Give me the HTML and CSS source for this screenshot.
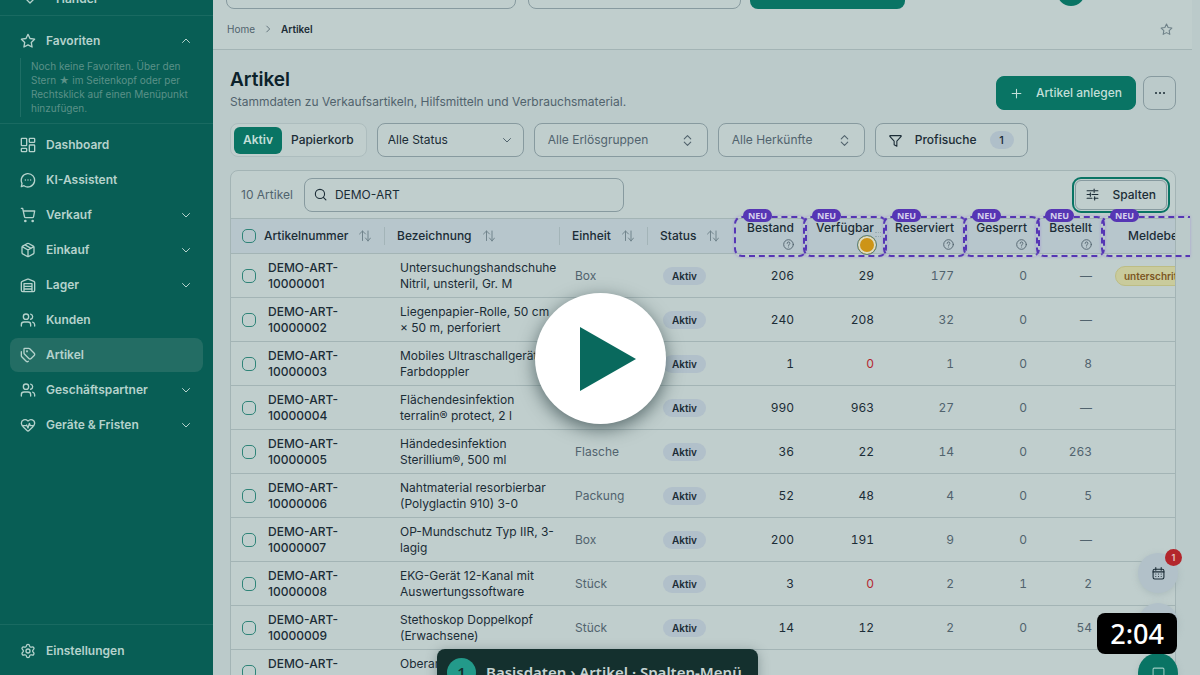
FILE: index.html
```html
<!DOCTYPE html>
<html lang="de">
<head>
<meta charset="utf-8">
<title>Artikel</title>
<link rel="stylesheet" href="styles.css">
</head>
<body>
<svg class="sprite" aria-hidden="true">
  <symbol id="star" viewBox="0 0 24 24"><path d="M12 2l3 6.3 6.9 1-5 4.800 1.200 6.900L12 17.800 5.900 21l1.200-6.900-5-4.800 6.900-1z"/></symbol>
  <symbol id="up" viewBox="0 0 24 24"><path d="m5 15 7-7 7 7"/></symbol>
  <symbol id="down" viewBox="0 0 24 24"><path d="m5 9 7 7 7-7"/></symbol>
  <symbol id="right" viewBox="0 0 24 24"><path d="m9 5 7 7-7 7"/></symbol>
  <symbol id="updown" viewBox="0 0 24 24"><path d="m6 15 6 6 6-6M6 9l6-6 6 6"/></symbol>
  <symbol id="shield" viewBox="0 0 24 24"><path d="m4 10 8 8 8-8"/></symbol>
  <symbol id="dashboard" viewBox="0 0 24 24"><rect x="2" y="2" width="8" height="11" rx="1"/><rect x="14" y="2" width="8" height="6" rx="1"/><rect x="14" y="12" width="8" height="10" rx="1"/><rect x="2" y="17" width="8" height="5" rx="1"/></symbol>
  <symbol id="chat" viewBox="0 0 24 24"><path d="M6 20.500A10 10 0 1 0 3 17L2 22zM8 12h.01M12 12h.01M16 12h.01"/></symbol>
  <symbol id="cart" viewBox="0 0 24 24"><circle cx="8" cy="21" r="1"/><circle cx="19" cy="21" r="1"/><path d="M2 2h2l2.700 12.400a2 2 0 0 0 2 1.600h9.700a2 2 0 0 0 2-1.600L22 6H5"/></symbol>
  <symbol id="package" viewBox="0 0 24 24"><path d="M11 21.700a2 2 0 0 0 2 0l7-4a2 2 0 0 0 1-1.700V8a2 2 0 0 0-1-1.700l-7-4a2 2 0 0 0-2 0l-7 4A2 2 0 0 0 3 8v8a2 2 0 0 0 1 1.700zM12 22V12M3.300 7 12 12l8.700-5M7.500 4.300l9 5.150"/></symbol>
  <symbol id="warehouse" viewBox="0 0 24 24"><path d="M22 8.300V20a2 2 0 0 1-2 2H4a2 2 0 0 1-2-2V8.300a2 2 0 0 1 1.300-1.800l8-3.200a2 2 0 0 1 1.500 0l8 3.200A2 2 0 0 1 22 8.300zM6 18h12M6 14h12M6 22V10h12v12"/></symbol>
  <symbol id="users" viewBox="0 0 24 24"><path d="M16 21v-2a4 4 0 0 0-4-4H6a4 4 0 0 0-4 4v2M22 21v-2a4 4 0 0 0-3-3.870M16 3.130a4 4 0 0 1 0 7.750"/><circle cx="9" cy="7" r="4"/></symbol>
  <symbol id="tags" viewBox="0 0 24 24"><path d="M13.172 2a2 2 0 0 1 1.414.586l6.710 6.710a2.400 2.400 0 0 1 0 3.408l-4.592 4.592a2.400 2.400 0 0 1-3.408 0l-6.710-6.710A2 2 0 0 1 6 9.172V3a1 1 0 0 1 1-1zM2 7v6.172a2 2 0 0 0 .586 1.414l6.710 6.710a2.400 2.400 0 0 0 3.191.193"/><circle cx="10.500" cy="6.500" r=".6"/></symbol>
  <symbol id="heart" viewBox="0 0 24 24"><path d="M2 9.500a5.500 5.500 0 0 1 9.591-3.676.56.56 0 0 0 .818 0A5.490 5.490 0 0 1 22 9.500c0 2.290-1.500 4-3 5.500l-5.492 5.313a2 2 0 0 1-3 .019L5 15c-1.500-1.500-3-3.200-3-5.500M3.220 13H9.500l.5-1 2 4.500 2-7 1.500 3.500h5.270"/></symbol>
  <symbol id="gear" viewBox="0 0 24 24"><path d="M9.671 4.136a2.340 2.340 0 0 1 4.659 0 2.340 2.340 0 0 0 3.319 1.915 2.340 2.340 0 0 1 2.330 4.033 2.340 2.340 0 0 0 0 3.831 2.340 2.340 0 0 1-2.330 4.033 2.340 2.340 0 0 0-3.319 1.915 2.340 2.340 0 0 1-4.659 0 2.340 2.340 0 0 0-3.320-1.915 2.340 2.340 0 0 1-2.330-4.033 2.340 2.340 0 0 0 0-3.831A2.340 2.340 0 0 1 6.350 6.051a2.340 2.340 0 0 0 3.319-1.915"/><circle cx="12" cy="12" r="3"/></symbol>
  <symbol id="plus" viewBox="0 0 24 24"><path d="M4 12h16M12 4v16"/></symbol>
  <symbol id="dots" viewBox="0 0 24 24"><path d="M4 12h.01M12 12h.01M20 12h.01"/></symbol>
  <symbol id="funnel" viewBox="0 0 24 24"><path d="M2 3h20a.7.7 0 0 1 .5 1.200L14.500 13v9.500l-5-2.500V13L1.500 4.200A.7.700 0 0 1 2 3z"/></symbol>
  <symbol id="search" viewBox="0 0 24 24"><circle cx="11" cy="11" r="8.500"/><path d="m22 22-4.800-4.800"/></symbol>
  <symbol id="sliders" viewBox="0 0 24 24"><path d="M2 5h11M17 5h5M15 2v6M2 12h5M11 12h11M8 9v6M2 19h9M15 19h7M16 16v6"/></symbol>
  <symbol id="sort" viewBox="0 0 24 24"><path d="M7 21V2M1 8l6-6 6 6M18 2v20M13 16l5 6 5-6"/></symbol>
  <symbol id="help" viewBox="0 0 24 24"><circle cx="12" cy="12" r="10.500"/><path d="M9 9.500a3 3 0 0 1 6 0c0 2-3 2.500-3 4.500M12 17.500h.01"/></symbol>
  <symbol id="calendar" viewBox="0 0 24 24"><rect x="2" y="4" width="20" height="18" rx="3"/><path d="M7 1v5M17 1v5M2 9h20M7 13h.01M12 13h.01M17 13h.01M7 17.500h.01M12 17.500h.01M17 17.500h.01"/></symbol>
  <symbol id="square" viewBox="0 0 24 24"><path d="M2 24V4a2 2 0 0 1 2-2h16a2 2 0 0 1 2 2v20"/></symbol>
</svg>

<div class="app">
  <aside class="sidebar">
    <div class="org"><svg class="icon"><use href="#shield"/></svg><span>Handel</span></div>
    <section class="favorites">
      <button class="nav-item" type="button"><svg class="icon"><use href="#star"/></svg><span>Favoriten</span><svg class="chevron"><use href="#up"/></svg></button>
      <p class="hint">Noch keine Favoriten. Über den Stern ★ im Seitenkopf oder per Rechtsklick auf einen Menüpunkt hinzufügen.</p>
    </section>
    <nav class="nav">
      <a class="nav-item" href="#"><svg class="icon"><use href="#dashboard"/></svg><span>Dashboard</span></a>
      <a class="nav-item" href="#"><svg class="icon"><use href="#chat"/></svg><span>KI-Assistent</span></a>
      <a class="nav-item" href="#"><svg class="icon"><use href="#cart"/></svg><span>Verkauf</span><svg class="chevron"><use href="#down"/></svg></a>
      <a class="nav-item" href="#"><svg class="icon"><use href="#package"/></svg><span>Einkauf</span><svg class="chevron"><use href="#down"/></svg></a>
      <a class="nav-item" href="#"><svg class="icon"><use href="#warehouse"/></svg><span>Lager</span><svg class="chevron"><use href="#down"/></svg></a>
      <a class="nav-item" href="#"><svg class="icon"><use href="#users"/></svg><span>Kunden</span></a>
      <a class="nav-item active" href="#" aria-current="page"><svg class="icon"><use href="#tags"/></svg><span>Artikel</span></a>
      <a class="nav-item" href="#"><svg class="icon"><use href="#users"/></svg><span>Geschäftspartner</span><svg class="chevron"><use href="#down"/></svg></a>
      <a class="nav-item" href="#"><svg class="icon"><use href="#heart"/></svg><span>Geräte &amp; Fristen</span><svg class="chevron"><use href="#down"/></svg></a>
    </nav>
    <div class="side-foot"><a class="nav-item" href="#"><svg class="icon"><use href="#gear"/></svg><span>Einstellungen</span></a></div>
  </aside>

  <div class="main">
    <header class="page-head">
      <div class="topbar">
        <span class="top-box wide"></span><span class="top-box"></span><span class="top-button"></span><span class="avatar"></span>
      </div>
      <div class="crumb-row">
        <nav class="crumbs" aria-label="Pfad"><a href="#">Home</a><svg class="crumb-arrow"><use href="#right"/></svg><strong>Artikel</strong></nav>
        <button class="bare" type="button" aria-label="Favorit"><svg class="fav-star"><use href="#star"/></svg></button>
      </div>
    </header>

    <main class="content">
      <div class="title-row">
        <div>
          <h1>Artikel</h1>
          <p class="subtitle">Stammdaten zu Verkaufsartikeln, Hilfsmitteln und Verbrauchsmaterial.</p>
        </div>
        <div class="actions">
          <button class="btn primary" type="button"><svg class="icon-sm"><use href="#plus"/></svg>Artikel anlegen</button>
          <button class="btn more" type="button" aria-label="Mehr"><svg class="icon-dots"><use href="#dots"/></svg></button>
        </div>
      </div>

      <div class="filters">
        <div class="segmented"><button class="seg on" type="button">Aktiv</button><button class="seg" type="button">Papierkorb</button></div>
        <label class="select-box"><select aria-label="Status"><option>Alle Status</option></select><svg class="chevron"><use href="#down"/></svg></label>
        <button class="combo groups" type="button">Alle Erlösgruppen<svg class="icon-sm"><use href="#updown"/></svg></button>
        <button class="combo origins" type="button">Alle Herkünfte<svg class="icon-sm"><use href="#updown"/></svg></button>
        <button class="btn pro" type="button"><svg class="icon-sm"><use href="#funnel"/></svg>Profisuche<span class="count">1</span></button>
      </div>

      <section class="card">
        <div class="toolbar">
          <span class="total">10 Artikel</span>
          <label class="search"><svg class="icon-sm"><use href="#search"/></svg><input type="text" value="DEMO-ART" aria-label="Artikel suchen"></label>
          <button class="btn columns" type="button"><svg class="icon-sm"><use href="#sliders"/></svg>Spalten</button>
        </div>
        <div class="table-wrap">
          <table>
            <colgroup><col class="c-check"><col class="c-number"><col class="c-name"><col class="c-unit"><col class="c-status"><col class="c-stock"><col class="c-free"><col class="c-reserved"><col class="c-blocked"><col class="c-ordered"><col class="c-level"></colgroup>
            <thead>
              <tr>
                <th class="check"><input type="checkbox" aria-label="Alle auswählen"></th>
                <th class="sep first">Artikelnummer<svg class="sort"><use href="#sort"/></svg></th>
                <th class="sep">Bezeichnung<svg class="sort"><use href="#sort"/></svg></th>
                <th class="sep">Einheit<svg class="sort"><use href="#sort"/></svg></th>
                <th>Status<svg class="sort"><use href="#sort"/></svg></th>
                <th class="num">Bestand<svg class="help"><use href="#help"/></svg></th>
                <th class="num">Verfügbar<svg class="help"><use href="#help"/></svg></th>
                <th class="num">Reserviert<svg class="help"><use href="#help"/></svg></th>
                <th class="num">Gesperrt<svg class="help"><use href="#help"/></svg></th>
                <th class="num">Bestellt<svg class="help"><use href="#help"/></svg></th>
                <th class="level">Meldebestand</th>
              </tr>
            </thead>
            <tbody>
              <tr><td class="check"><input type="checkbox" aria-label="10000001"></td><td class="number">DEMO-ART-10000001</td><td>Untersuchungshandschuhe Nitril, unsteril, Gr. M</td><td class="unit">Box</td><td><span class="tag">Aktiv</span></td><td class="num">206</td><td class="num">29</td><td class="num dim">177</td><td class="num dim">0</td><td class="num dim">—</td><td class="low-cell"><span class="low">unterschritten</span></td></tr>
              <tr><td class="check"><input type="checkbox" aria-label="10000002"></td><td class="number">DEMO-ART-10000002</td><td>Liegenpapier-Rolle, 50 cm × 50 m, perforiert</td><td class="unit">Box</td><td><span class="tag">Aktiv</span></td><td class="num">240</td><td class="num">208</td><td class="num dim">32</td><td class="num dim">0</td><td class="num dim">—</td><td></td></tr>
              <tr><td class="check"><input type="checkbox" aria-label="10000003"></td><td class="number">DEMO-ART-10000003</td><td>Mobiles Ultraschallgerät, Farbdoppler</td><td class="unit">Stück</td><td><span class="tag">Aktiv</span></td><td class="num">1</td><td class="num out">0</td><td class="num dim">1</td><td class="num dim">0</td><td class="num dim">8</td><td></td></tr>
              <tr><td class="check"><input type="checkbox" aria-label="10000004"></td><td class="number">DEMO-ART-10000004</td><td>Flächendesinfektion terralin® protect, 2 l</td><td class="unit">Flasche</td><td><span class="tag">Aktiv</span></td><td class="num">990</td><td class="num">963</td><td class="num dim">27</td><td class="num dim">0</td><td class="num dim">—</td><td></td></tr>
              <tr><td class="check"><input type="checkbox" aria-label="10000005"></td><td class="number">DEMO-ART-10000005</td><td>Händedesinfektion Sterillium®, 500 ml</td><td class="unit">Flasche</td><td><span class="tag">Aktiv</span></td><td class="num">36</td><td class="num">22</td><td class="num dim">14</td><td class="num dim">0</td><td class="num dim">263</td><td></td></tr>
              <tr><td class="check"><input type="checkbox" aria-label="10000006"></td><td class="number">DEMO-ART-10000006</td><td>Nahtmaterial resorbierbar (Polyglactin 910) 3-0</td><td class="unit">Packung</td><td><span class="tag">Aktiv</span></td><td class="num">52</td><td class="num">48</td><td class="num dim">4</td><td class="num dim">0</td><td class="num dim">5</td><td></td></tr>
              <tr><td class="check"><input type="checkbox" aria-label="10000007"></td><td class="number">DEMO-ART-10000007</td><td>OP-Mundschutz Typ IIR, 3-<wbr>lagig</td><td class="unit">Box</td><td><span class="tag">Aktiv</span></td><td class="num">200</td><td class="num">191</td><td class="num dim">9</td><td class="num dim">0</td><td class="num dim">—</td><td></td></tr>
              <tr><td class="check"><input type="checkbox" aria-label="10000008"></td><td class="number">DEMO-ART-10000008</td><td>EKG-Gerät 12-Kanal mit Auswertungssoftware</td><td class="unit">Stück</td><td><span class="tag">Aktiv</span></td><td class="num">3</td><td class="num out">0</td><td class="num dim">2</td><td class="num dim">1</td><td class="num dim">2</td><td></td></tr>
              <tr><td class="check"><input type="checkbox" aria-label="10000009"></td><td class="number">DEMO-ART-10000009</td><td>Stethoskop Doppelkopf (Erwachsene)</td><td class="unit">Stück</td><td><span class="tag">Aktiv</span></td><td class="num">14</td><td class="num">12</td><td class="num dim">2</td><td class="num dim">0</td><td class="num dim">54</td><td></td></tr>
              <tr><td class="check"><input type="checkbox" aria-label="10000010"></td><td class="number">DEMO-ART-10000010</td><td>Oberarm-Blutdruckmessgerät</td><td class="unit"></td><td></td><td class="num"></td><td class="num"></td><td class="num"></td><td class="num"></td><td class="num"></td><td></td></tr>
            </tbody>
          </table>
        </div>
        <div class="marks">
          <div class="mark"><span class="neu">NEU</span></div>
          <div class="mark"><span class="neu">NEU</span><span class="grip"></span><span class="pointer"></span></div>
          <div class="mark"><span class="neu">NEU</span></div>
          <div class="mark"><span class="neu">NEU</span></div>
          <div class="mark"><span class="neu">NEU</span></div>
          <div class="mark open"><span class="neu">NEU</span></div>
        </div>
      </section>
    </main>
  </div>

  <div class="fabs">
    <button class="fab" type="button" aria-label="Kalender"><svg class="icon-sm"><use href="#calendar"/></svg><span class="fab-count">1</span></button>
    <button class="fab" type="button" aria-label="Hinweise"></button>
    <button class="fab solid" type="button" aria-label="Notizen"><svg class="icon-sm"><use href="#square"/></svg></button>
  </div>
  <div class="caption"><span class="step">1</span><span>Basisdaten › Artikel · Spalten-Menü</span></div>
  <button class="play" type="button" aria-label="Video abspielen"><svg viewBox="0 0 56 64"><path d="M0 0 56 32 0 64z"/></svg></button>
  <span class="duration">2:04</span>
</div>
</body>
</html>
```

FILE: styles.css
```css
:root {
  --page: #bbcaca;
  --card: #c0cecd;
  --line: #a3b4b5;
  --field: #879a9f;
  --ink: #1b2c36;
  --muted: #51636d;
  --green: #097464;
  --side: #085e55;
  --side-ink: #b5d2cc;
  --violet: #5636b4;
}
* { box-sizing: border-box; }
body { margin: 0; font-family: Inter, "Liberation Sans", sans-serif; font-size: 12px; line-height: 16px; color: var(--ink); background: var(--page); }
button, input, select { font: inherit; color: inherit; margin: 0; }
button { padding: 0; border: 0; background: none; }
a { color: inherit; text-decoration: none; }
svg { fill: none; stroke: currentColor; stroke-width: 2; stroke-linecap: round; stroke-linejoin: round; flex: none; }
.sprite { display: none; }
.app { position: relative; display: flex; height: 100vh; overflow: hidden; }

.sidebar { flex: 0 0 213px; display: flex; flex-direction: column; background: var(--side); color: var(--side-ink); }
.org { flex: none; display: flex; align-items: flex-end; gap: 18px; height: 16px; padding: 0 22px 8px; overflow: hidden; border-bottom: 1px solid #196a61; font-weight: 600; }
.icon { width: 16px; height: 16px; }
.chevron { width: 12px; height: 12px; margin-left: auto; }
.favorites { padding: 8px 10px 6px; border-bottom: 1px solid #196a61; }
.nav-item { display: flex; align-items: center; gap: 10px; width: 100%; height: 34px; padding: 0 11px 0 10px; border-radius: 8px; font-weight: 600; text-align: left; }
.nav-item.active { background: #236d64; }
.hint { margin: 0 0 0 10px; padding: 1px 0 2px 10px; border-left: 1px solid #1e6e65; font-size: 10px; line-height: 14px; color: #5b9188; }
.nav { display: flex; flex-direction: column; gap: 1px; padding: 4px 10px; }
.side-foot { margin-top: auto; padding: 9px 10px 7px; border-top: 1px solid #196a61; }

.main { flex: 1; min-width: 0; display: flex; flex-direction: column; padding-right: 8px; }
.page-head { flex: none; background: var(--card); border-bottom: 1px solid var(--line); }
.topbar { display: flex; align-items: flex-end; height: 9px; padding: 0 107px 0 13px; overflow: hidden; }
.top-box { flex: 0 0 213px; height: 34px; margin-right: 9px; border: 1px solid var(--field); border-radius: 8px; }
.top-box.wide { flex-basis: 290px; margin-right: 12px; }
.top-button { flex: 0 0 155px; height: 34px; border-radius: 8px; background: var(--green); }
.avatar { width: 28px; height: 28px; margin: 0 0 3px auto; border-radius: 50%; background: var(--green); }
.crumb-row { display: flex; align-items: center; justify-content: space-between; height: 40px; padding: 0 19px 0 14px; }
.crumbs { display: flex; align-items: center; gap: 8px; font-size: 10px; color: var(--muted); }
.crumbs strong { font-weight: 600; color: var(--ink); }
.crumb-arrow { width: 10px; height: 10px; }
.bare { display: flex; color: #6e8188; }
.fav-star { width: 13px; height: 13px; }

.content { flex: 1; padding: 18px 16px 0 17px; }
.title-row { display: flex; justify-content: space-between; align-items: flex-end; }
h1 { margin: 0; font-size: 19px; line-height: 24px; font-weight: 600; color: #0c222b; }
.subtitle { margin: 2px 0 0; color: var(--muted); }
.actions { display: flex; gap: 7px; }
.btn { display: flex; align-items: center; height: 34px; border: 1px solid var(--field); border-radius: 8px; font-weight: 500; background: var(--card); }
.icon-sm { width: 13px; height: 13px; }
.btn.primary { gap: 13px; padding: 0 13px; border-color: var(--green); background: var(--green); color: #c3dfd9; }
.btn.more { justify-content: center; width: 33px; background: none; }
.icon-dots { width: 12px; height: 12px; stroke-width: 4; }

.filters { display: flex; gap: 10px; margin-top: 13px; }
.segmented { display: flex; align-items: center; height: 34px; padding: 0 3px; border: 1px solid #adbdbe; border-radius: 8px; background: var(--card); }
.seg { height: 27px; padding: 0 9px; border-radius: 6px; font-weight: 500; }
.seg.on { background: var(--green); color: #c3dfd9; font-weight: 600; }
.select-box, .combo { display: flex; align-items: center; height: 34px; border: 1px solid var(--field); border-radius: 8px; background: var(--card); }
.select-box { flex: 0 0 147px; padding: 0 10px; }
.select-box .chevron { color: var(--muted); }
.select-box select { flex: 1; min-width: 0; border: 0; padding: 0; background: none; appearance: none; outline: 0; }
.combo { justify-content: space-between; padding: 0 13px; color: var(--muted); }
.combo.groups { flex: 0 0 174px; }
.combo.origins { flex: 0 0 147px; }
.btn.pro { gap: 13px; padding: 0 13px; }
.count { min-width: 24px; padding: 1px 0; border-radius: 10px; background: #afbfc9; text-align: center; font-size: 11px; }

.card { position: relative; margin-top: 13px; border: 1px solid var(--line); border-radius: 8px 8px 0 0; background: var(--card); }
.toolbar { display: flex; align-items: center; gap: 11px; height: 47px; padding: 0 8px 0 10px; }
.total { color: var(--muted); }
.search { flex: 0 1 320px; display: flex; align-items: center; gap: 8px; height: 34px; padding: 0 9px; border: 1px solid var(--field); border-radius: 8px; }
.search input { flex: 1; min-width: 0; padding: 0; border: 0; background: none; outline: 0; }
.btn.columns { gap: 13px; height: 30px; margin-left: auto; padding: 0 10px; outline: 2px solid var(--green); outline-offset: 1px; border-radius: 6px; }

.table-wrap { overflow: hidden; }
table { width: 1000px; min-width: 100%; table-layout: fixed; border-collapse: separate; border-spacing: 0; }
.c-check { width: 27px; }
.c-number { width: 127px; }
.c-name { width: 175px; }
.c-unit { width: 88px; }
.c-status { width: 86px; }
.c-stock { width: 72px; }
.c-free { width: 80px; }
.c-reserved { width: 80px; }
.c-blocked { width: 73px; }
.c-ordered { width: 65px; }
th { height: 36px; padding: 0 12px; border-top: 1px solid var(--line); border-bottom: 1px solid var(--line); background: #b7c6cc; text-align: left; font-weight: 500; white-space: nowrap; }
td { height: 44px; padding: 0 4px 0 15px; border-bottom: 1px solid var(--line); }
th.check, td.check { padding: 0 0 0 11px; }
th.first { padding-left: 6px; }
td.number { padding: 0 30px 0 10px; font-weight: 500; }
th.sep { background: linear-gradient(#a3b4b8, #a3b4b8) right center / 1px 18px no-repeat #b7c6cc; }
th.num { padding-bottom: 3px; }
th.num, td.num { padding-left: 0; padding-right: 12px; text-align: right; font-variant-numeric: tabular-nums; }
th.level { padding-left: 24px; }
td.low-cell { padding-left: 11px; }
.sort { width: 12px; height: 12px; margin-left: 11px; vertical-align: -2px; color: #71848c; }
.help { display: block; width: 11px; height: 11px; margin: 3px 0 0 auto; color: var(--muted); }
.unit, .dim { color: var(--muted); }
.out { color: #b42830; }
input[type="checkbox"] { appearance: none; display: block; width: 14px; height: 14px; border: 1px solid #2f8478; border-radius: 5px; }
.tag { display: inline-block; padding: 1px 9px; border-radius: 9px; background: #b1c0ca; font-size: 10px; font-weight: 600; }
.low { display: inline-block; padding: 1px 8px; border: 1px solid #bdbd84; border-radius: 10px; background: #c9cb9c; color: #7c5622; font-size: 10px; font-weight: 600; }

.marks { position: absolute; top: 45px; left: 503px; right: -15px; display: grid; grid-template-columns: 69px 80px 80px 73px 65px 1fr; height: 41px; }
.mark { position: relative; margin-right: -4px; border: 2px dashed var(--violet); border-radius: 8px; box-shadow: 0 0 3px #a79bd3; }
.mark.open { margin-right: 0; border-right: 0; border-radius: 8px 0 0 8px; }
.neu { position: absolute; top: -9px; left: 7px; padding: 0 5px; border-radius: 7px; background: var(--violet); color: #d6d0ec; font: 700 9px/13px "Noto Sans", sans-serif; }
.pointer { position: absolute; right: 8px; bottom: 0; width: 20px; height: 20px; border: 1px solid #55807f; border-radius: 50%; background: #cd9417; box-shadow: inset 0 0 0 2px #dcdcc4; }
.grip { position: absolute; right: 4px; top: 14px; width: 6px; height: 5px; border: dotted #97a9b0; border-width: 1px 0; }

.fabs { position: absolute; right: 22px; top: 553px; display: flex; flex-direction: column; gap: 10px; }
.fab { position: relative; display: flex; align-items: center; justify-content: center; width: 40px; height: 40px; border-radius: 50%; background: #b2c1c9; box-shadow: 0 2px 6px #8fa2a866; }
.fab.solid { background: var(--green); color: #9ccac1; }
.fab-count { position: absolute; top: -4px; right: -4px; width: 17px; height: 17px; border-radius: 50%; background: #b3262c; color: #e6c8c8; font-size: 9px; line-height: 17px; font-weight: 600; }
.caption { position: absolute; left: 437px; top: 649px; display: flex; align-items: center; gap: 10px; height: 46px; padding: 0 16px 0 10px; border-radius: 8px; background: #14302e; color: #c6d4d2; box-shadow: 0 2px 12px #31474a66; font: 600 15px/20px "Noto Sans", sans-serif; white-space: nowrap; }
.step { width: 29px; height: 29px; border-radius: 50%; background: #239a8a; color: #14302e; line-height: 29px; text-align: center; }
.play { position: absolute; left: 50%; top: 293px; display: flex; align-items: center; justify-content: center; width: 131px; height: 131px; margin-left: -65px; padding-left: 15px; border-radius: 50%; background: #fff; box-shadow: 0 5px 18px #22383aaa; }
.play svg { width: 56px; height: 64px; fill: #09695d; stroke: none; }
.duration { position: absolute; right: 23px; top: 613px; padding: 0 13px; border-radius: 8px; background: #000; color: #fff; font: 500 27px/41px "Noto Sans", sans-serif; }
```
